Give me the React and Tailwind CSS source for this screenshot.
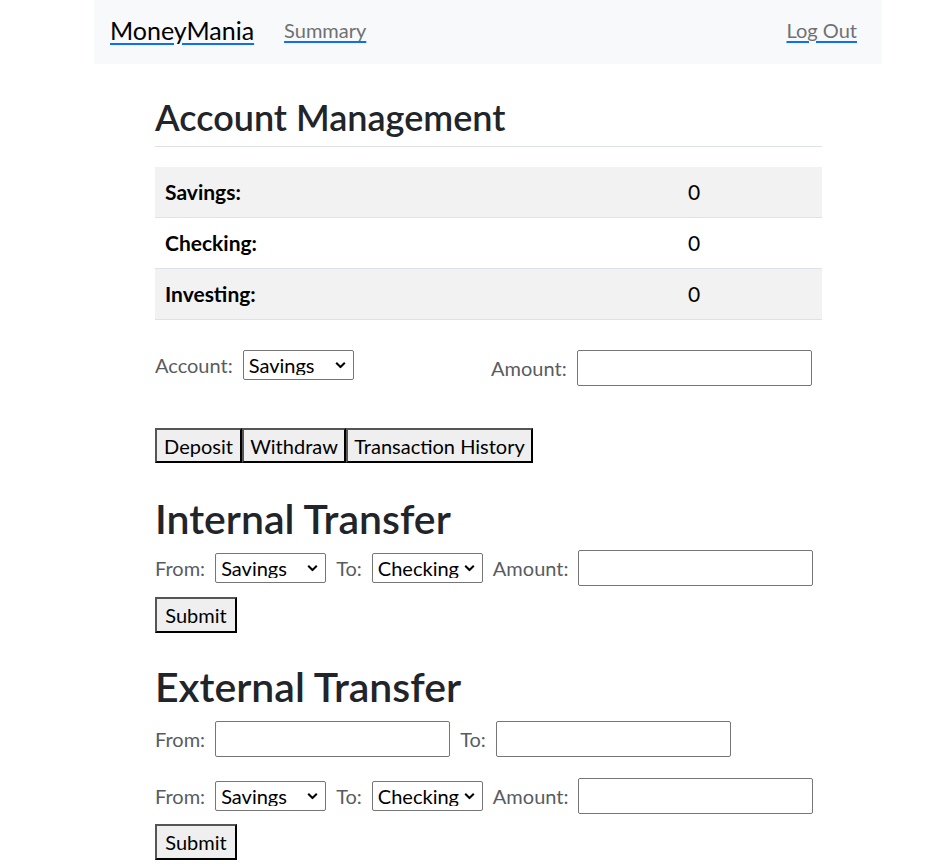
import React from "react";

const FONT = { fontFamily: 'Lato, "Noto Sans", Arial, sans-serif' };

function Chevron() {
  return (
    <svg width="11" height="7" viewBox="0 0 11 7" className="pointer-events-none absolute right-[8px] top-1/2 -translate-y-1/2">
      <path d="M1.2 1.2 L5.5 5.5 L9.8 1.2" fill="none" stroke="#000" strokeWidth="2" />
    </svg>
  );
}

function Select({ value, options }) {
  return (
    <div className="relative h-[30px] w-[111px] shrink-0">
      <select
        defaultValue={value}
        className="h-full w-full appearance-none rounded-[2px] border border-[#767676] bg-white pl-[5px] pr-[14px] text-[20px] leading-none text-black outline-none"
      >
        {options.map((o) => (
          <option key={o}>{o}</option>
        ))}
      </select>
      <Chevron />
    </div>
  );
}

const ACCOUNTS = ["Savings", "Checking", "Investing"];

function TextInput() {
  return <input type="text" className="h-[36px] w-[235px] shrink-0 rounded-[2px] border border-[#767676] bg-white px-2 text-[20px] outline-none" />;
}

function Label({ children }) {
  return <span className="shrink-0 text-[20px] leading-none text-[#595c5f]">{children}</span>;
}

function Btn({ children, w }) {
  return (
    <button className={`h-[35px] ${w} border-2 border-t-[#555] border-l-[#555] border-r-black border-b-black bg-[#efefef] text-[20px] leading-none text-black`}>
      {children}
    </button>
  );
}

export default function App() {
  return (
    <div className="min-h-screen bg-white text-[#212529]" style={FONT}>
      <nav className="ml-[94px] flex h-[64px] w-[788px] items-center bg-[#f8f9fa] pb-[4px] pl-4 pr-[25px]">
        <a href="#" className="text-[25px] leading-none text-black underline decoration-[#0d6efd] underline-offset-[3px]">
          MoneyMania
        </a>
        <a href="#" className="ml-[30px] text-[20px] leading-none text-[#6f7174] underline decoration-[#0d6efd] underline-offset-[3px]">
          Summary
        </a>
        <a href="#" className="ml-auto text-[20px] leading-none text-[#6f7174] underline decoration-[#0d6efd] underline-offset-[3px]">
          Log Out
        </a>
      </nav>

      <main className="ml-[155px] w-[667px] pb-2">
        <h2 className="mt-[31px] h-[44px] text-[36px] font-semibold leading-[44px] text-[#212529]">Account Management</h2>
        <div className="mt-[7px] h-px bg-[#dee2e6]" />

        <div className="mt-[20px]">
          {ACCOUNTS.map((a, i) => (
            <div key={a} className={`flex h-[51px] items-center border-b border-[#dee2e6] ${i % 2 === 0 ? "bg-[#f2f2f2]" : "bg-white"}`}>
              <div className="w-[525px] pl-[10px] text-[21px] font-bold text-black">{a}:</div>
              <div className="pl-[8px] text-[21px] text-black">0</div>
            </div>
          ))}
        </div>

        <div className="mt-[30px] flex h-[36px] items-center">
          <div className="flex w-[336px] items-center gap-[10px] self-start">
            <div className="flex h-[30px] items-center gap-[10px]">
              <Label>Account:</Label>
              <Select value="Savings" options={ACCOUNTS} />
            </div>
          </div>
          <div className="flex items-center gap-[10px]">
            <Label>Amount:</Label>
            <TextInput />
          </div>
        </div>

        <div className="mt-[42px] flex">
          <Btn w="w-[87px]">Deposit</Btn>
          <Btn w="w-[104px]">Withdraw</Btn>
          <Btn w="w-[187px]">Transaction History</Btn>
        </div>

        <h1 className="mt-[32px] h-[48px] text-[41px] font-semibold leading-[48px] text-[#212529]">Internal Transfer</h1>
        <div className="mt-[7px] flex h-[36px] items-center gap-[10px]">
          <Label>From:</Label>
          <Select value="Savings" options={ACCOUNTS} />
          <Label>To:</Label>
          <Select value="Checking" options={ACCOUNTS} />
          <Label>Amount:</Label>
          <TextInput />
        </div>
        <div className="mt-[11px]">
          <Btn w="w-[82px] h-[36px]">Submit</Btn>
        </div>

        <h1 className="mt-[30px] h-[48px] text-[41px] font-semibold leading-[48px] text-[#212529]">External Transfer</h1>
        <div className="mt-[10px] flex h-[36px] items-center gap-[10px]">
          <Label>From:</Label>
          <TextInput />
          <Label>To:</Label>
          <TextInput />
        </div>
        <div className="mt-[21px] flex h-[36px] items-center gap-[10px]">
          <Label>From:</Label>
          <Select value="Savings" options={ACCOUNTS} />
          <Label>To:</Label>
          <Select value="Checking" options={ACCOUNTS} />
          <Label>Amount:</Label>
          <TextInput />
        </div>
        <div className="mt-[10px]">
          <Btn w="w-[82px] h-[36px]">Submit</Btn>
        </div>
      </main>
    </div>
  );
}
